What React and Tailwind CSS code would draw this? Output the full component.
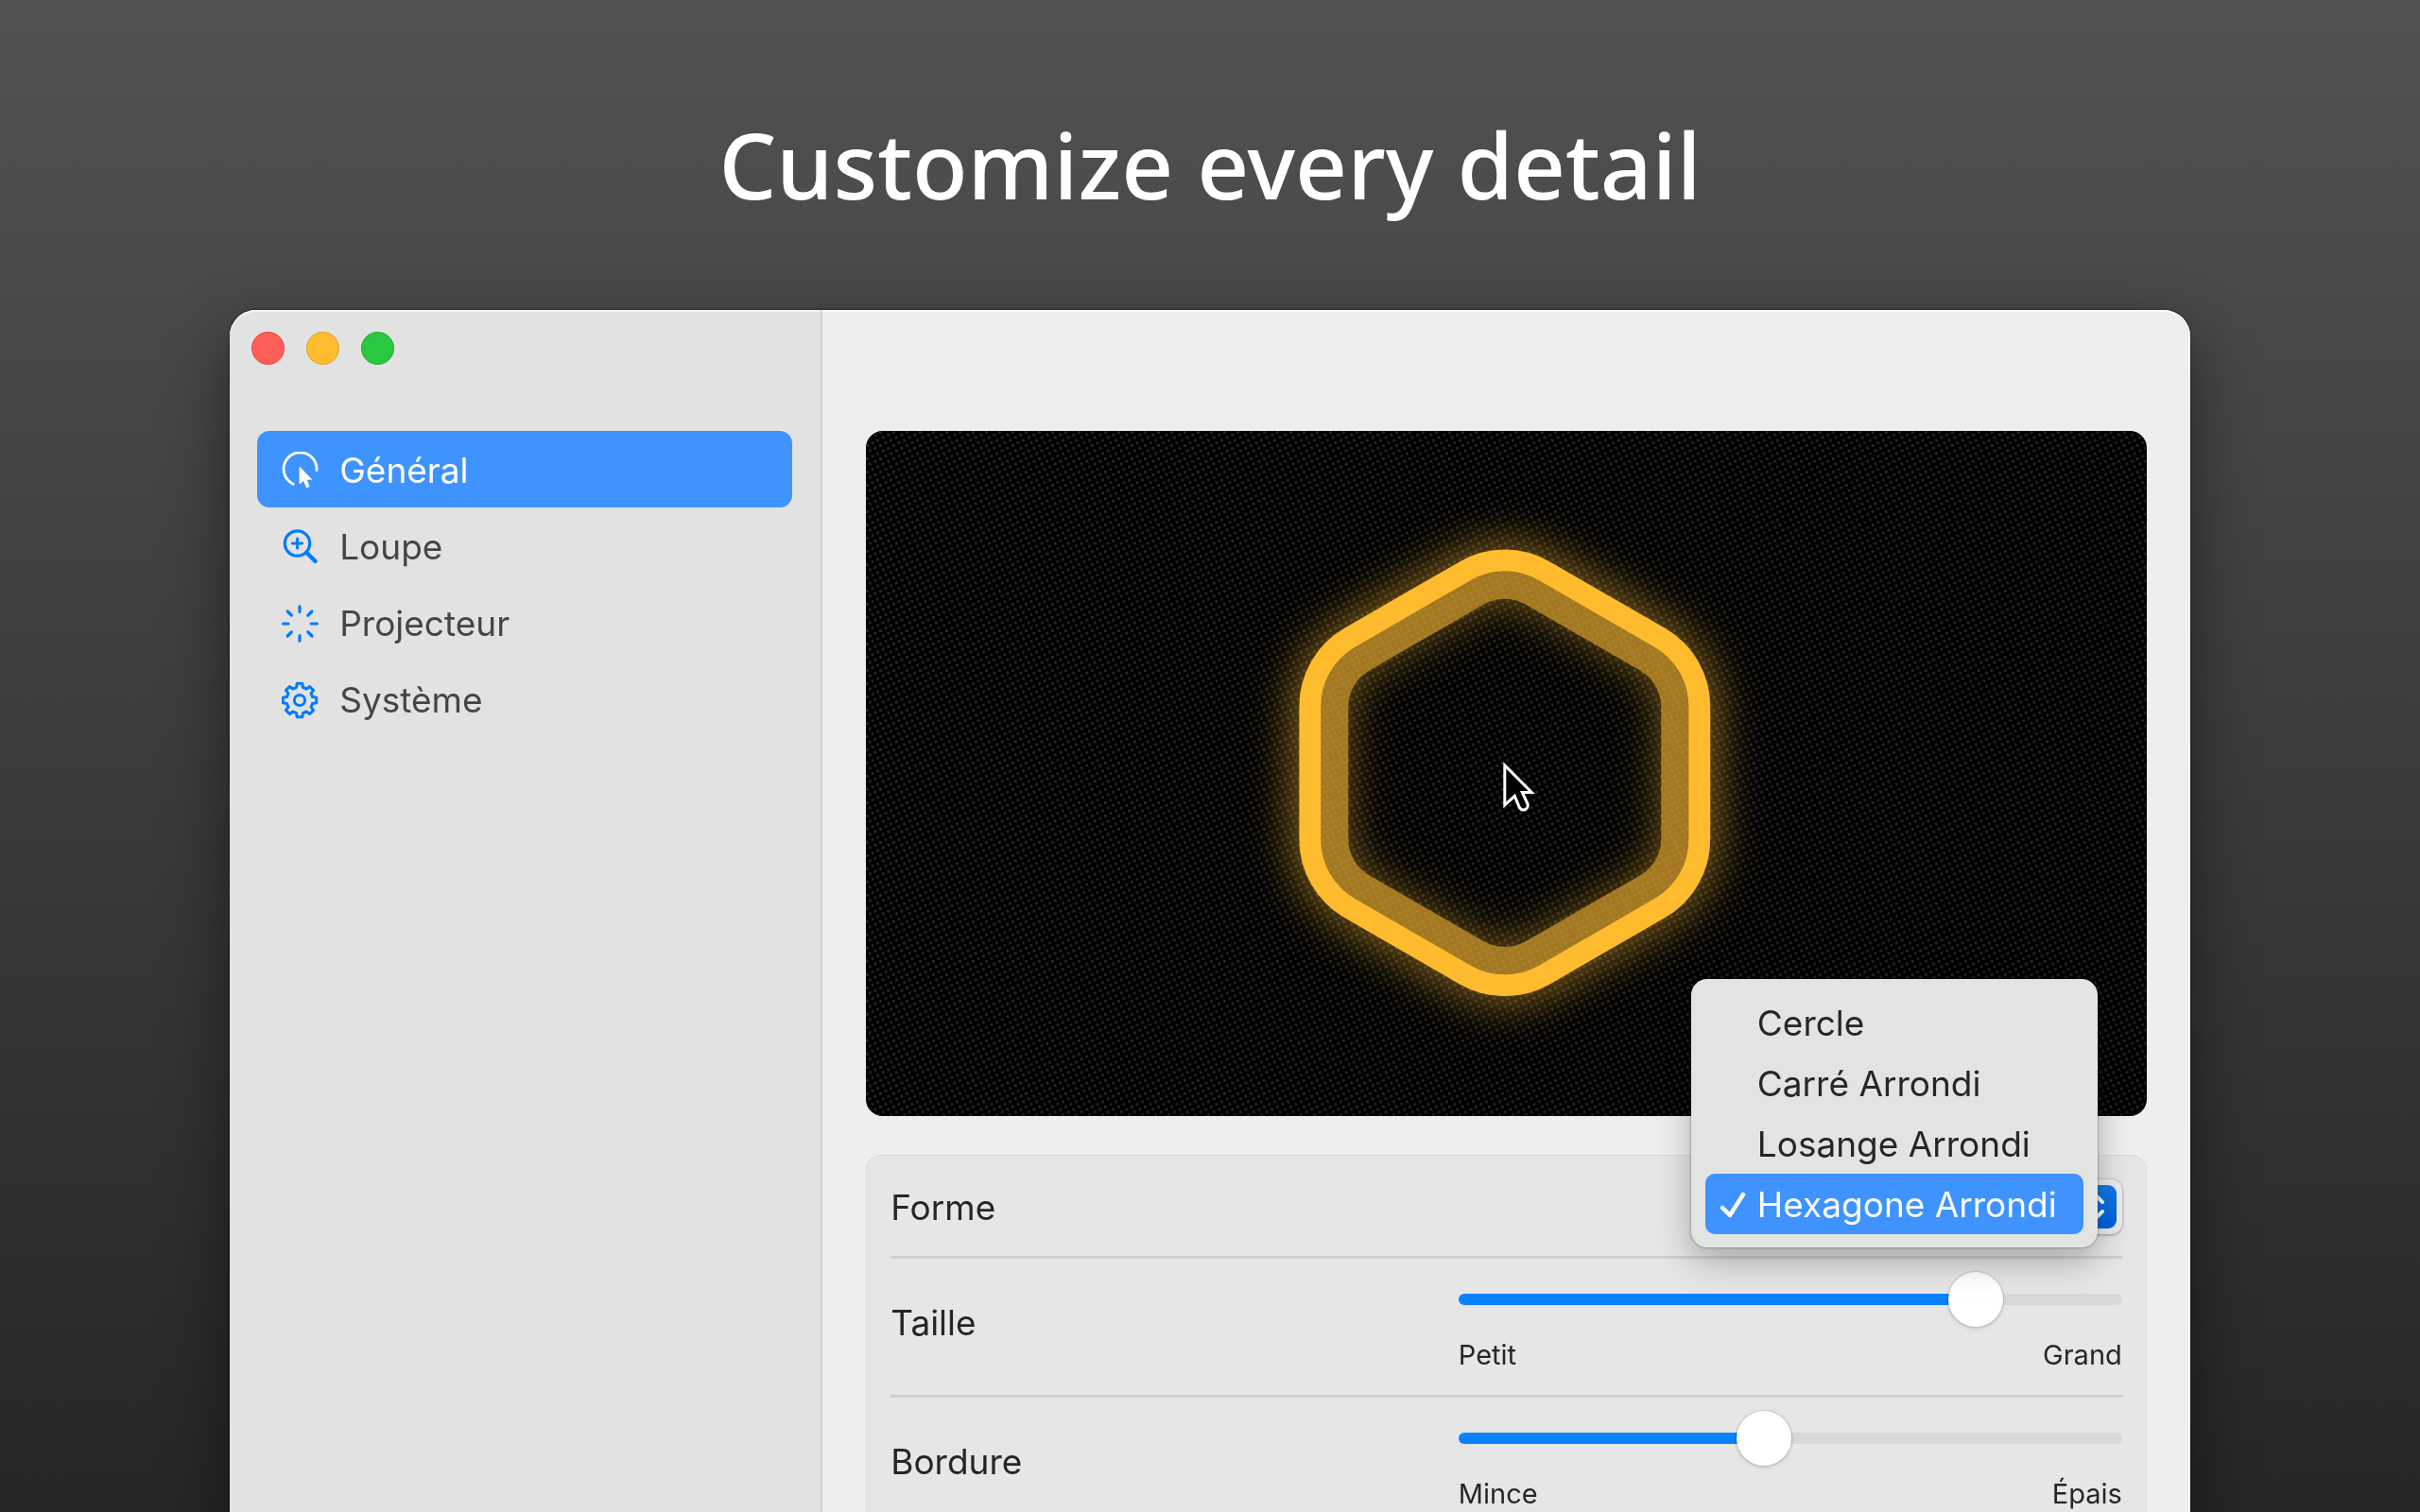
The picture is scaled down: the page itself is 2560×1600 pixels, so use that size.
import { useState } from 'react';

const ORANGE = '#ffbb2e';

const SHAPES = ['Cercle', 'Carré Arrondi', 'Losange Arrondi', 'Hexagone Arrondi'];

const TABS = [
    { id: 'general', label: 'Général', Icon: PointerIcon },
    { id: 'loupe', label: 'Loupe', Icon: LoupeIcon },
    { id: 'projecteur', label: 'Projecteur', Icon: RaysIcon },
    { id: 'systeme', label: 'Système', Icon: GearIcon },
];

function PointerIcon() {
    return (
        <svg viewBox="0 0 40 40" className="w-10 h-10" fill="none" aria-hidden="true">
            <path d="M12.2 34.2 A17.5 17.5 0 1 1 37 19.5" stroke="currentColor" strokeWidth="2.8" strokeLinecap="round" />
            <path d="M19 16.2 V34 L23.2 30.4 L26.4 38 L29.2 36.8 L26.2 29.4 L31.6 29.2 Z" fill="currentColor" stroke="currentColor" strokeWidth="0.8" strokeLinejoin="round" />
        </svg>
    );
}

function LoupeIcon() {
    return (
        <svg viewBox="0 0 40 40" className="w-10 h-10" fill="none" stroke="currentColor" strokeLinecap="round" aria-hidden="true">
            <circle cx="16.5" cy="16" r="13.2" strokeWidth="3.2" />
            <path d="M16.5 10.8 V21.2 M11.3 16 H21.7" strokeWidth="2.8" />
            <path d="M26.3 25.8 L35.6 35" strokeWidth="4.4" />
        </svg>
    );
}

function RaysIcon() {
    return (
        <svg viewBox="0 0 40 40" className="w-10 h-10" fill="none" stroke="currentColor" strokeWidth="3.2" strokeLinecap="round" aria-hidden="true">
            <path d="M19 1.8 V7.5 M19 32.5 V38.2 M1.6 20 H7 M31.2 20 H37.4" />
            <path d="M6.2 7 L10.4 11.2 M27.8 28.8 L32 33 M6.2 33 L10.4 28.8 M27.8 11.2 L32 7" />
        </svg>
    );
}

// eight rounded teeth around the centre
function gearPath(cx, cy) {
    const profile = [[-14, 14], [-9, 18], [9, 18], [14, 14]];
    const points = [];
    for (let tooth = 0; tooth < 8; tooth++) {
        for (const [angle, radius] of profile) {
            const a = ((tooth * 45 + angle - 90) * Math.PI) / 180;
            points.push(`${(cx + radius * Math.cos(a)).toFixed(2)} ${(cy + radius * Math.sin(a)).toFixed(2)}`);
        }
    }
    return `M${points.join(' L')} Z`;
}

function GearIcon() {
    return (
        <svg viewBox="0 0 40 40" className="w-10 h-10" fill="none" stroke="currentColor" strokeWidth="3" strokeLinejoin="round" aria-hidden="true">
            <path d={gearPath(19, 20)} />
            <circle cx="19" cy="20" r="5.6" />
        </svg>
    );
}

function hexagonPath(cx, cy, halfWidth, radius) {
    const size = halfWidth / Math.cos(Math.PI / 6);
    const cut = (radius * Math.tan(Math.PI / 6)) / size;
    const corners = [0, 1, 2, 3, 4, 5].map((i) => {
        const a = ((i * 60 - 90) * Math.PI) / 180;
        return [cx + size * Math.cos(a), cy + size * Math.sin(a)];
    });
    const towards = (from, to) => [from[0] + (to[0] - from[0]) * cut, from[1] + (to[1] - from[1]) * cut];

    return corners
        .map((corner, i) => {
            const start = towards(corner, corners[(i + 5) % 6]);
            const end = towards(corner, corners[(i + 1) % 6]);
            return `${i === 0 ? 'M' : 'L'}${start[0]} ${start[1]} A${radius} ${radius} 0 0 1 ${end[0]} ${end[1]}`;
        })
        .join(' ') + ' Z';
}

function Preview() {
    const border = hexagonPath(676, 362, 206, 84);
    const inner = hexagonPath(676, 362, 180, 59);

    return (
        <svg viewBox="0 0 1355 725" className="block w-full rounded-[18px] bg-black" role="img" aria-label="Hexagone Arrondi">
            <defs>
                <pattern id="mesh" width="14" height="14" patternUnits="userSpaceOnUse">
                    <path d="M0 0h3v3h-3z M2.8 5.6h3v3h-3z M5.6 11.2h2.8v2.8h-2.8z M8.4 2.8h3v3h-3z M11.2 8.4h2.8v3h-2.8z" fill="#242424" />
                </pattern>
                <filter id="glow" x="-40%" y="-40%" width="180%" height="180%" colorInterpolationFilters="sRGB">
                    <feGaussianBlur stdDeviation="26" />
                </filter>
            </defs>
            <rect width="1355" height="725" fill="url(#mesh)" />
            <g fill="none" stroke={ORANGE} filter="url(#glow)" opacity="0.72">
                <path d={border} strokeWidth="25" />
                <path d={inner} strokeWidth="29" opacity="0.5" />
            </g>
            <path d={inner} fill="none" stroke="#a37820" strokeWidth="29" />
            <path d={inner} fill="none" stroke="url(#mesh)" strokeWidth="29" className="mix-blend-screen" opacity="0.5" />
            <path d={border} fill="none" stroke={ORANGE} strokeWidth="23" />
            <path
                d="M676 354 V396 L686.5 386.5 L691.5 398.5 Q694 402.5 698 400.5 Q701.5 398.5 700 394.5 L694.5 382.5 H704.5 Z"
                fill="#000"
                stroke="#fff"
                strokeWidth="3"
            />
        </svg>
    );
}

function SliderRow({ id, label, min, max, initial }) {
    const [value, setValue] = useState(initial);
    return (
        <div className="flex items-center justify-between border-t-3 border-[#cfcfcf] pt-[37px] pb-6">
            <label htmlFor={id} className="pb-5 text-[37px] leading-[46px]">{label}</label>
            <div className="w-[702px]">
                <input
                    id={id}
                    type="range"
                    min="0"
                    max="1000"
                    value={value}
                    onChange={(e) => setValue(Number(e.target.value))}
                    className="block w-full h-3 appearance-none rounded-full [&::-webkit-slider-thumb]:appearance-none [&::-webkit-slider-thumb]:size-[58px] [&::-webkit-slider-thumb]:rounded-full [&::-webkit-slider-thumb]:bg-white [&::-webkit-slider-thumb]:shadow-[0_0_2px_1px_rgba(0,0,0,0.12),0_2px_4px_rgba(0,0,0,0.12)]"
                    style={{ background: `linear-gradient(to right, #0a82ff ${value / 10}%, #d8d8d8 ${value / 10}%)` }}
                />
                <div className="mt-[35px] flex justify-between text-[29px] leading-9">
                    <span>{min}</span>
                    <span>{max}</span>
                </div>
            </div>
        </div>
    );
}

function ShapeRow() {
    const [shape, setShape] = useState('Hexagone Arrondi');
    return (
        <div className="flex items-center justify-between pt-[25px] pb-[23px]">
            <label htmlFor="forme" className="pt-[2px] text-[37px] leading-[46px]">Forme</label>
            <div className="relative w-[430px]">
                <select
                    id="forme"
                    value={shape}
                    onChange={(e) => setShape(e.target.value)}
                    className="block w-full h-[58px] appearance-none rounded-xl bg-[#ececec] pl-4 text-[37px] text-transparent shadow-[0_0_2px_1px_rgba(0,0,0,0.16),0_2px_3px_rgba(0,0,0,0.14)]"
                >
                    {SHAPES.map((name) => <option key={name}>{name}</option>)}
                </select>
                <span className="pointer-events-none absolute top-[6px] right-[6px] flex size-[46px] items-center justify-center rounded-[9px] bg-gradient-to-b from-[#1479e8] to-[#0060dc] text-white">
                    <svg viewBox="0 0 24 36" className="h-9 w-6" fill="none" stroke="currentColor" strokeWidth="4" strokeLinecap="round" strokeLinejoin="round" aria-hidden="true">
                        <path d="M4 13 L12 5 L20 13 M4 23 L12 31 L20 23" />
                    </svg>
                </span>
                <div role="listbox" aria-label="Forme" className="absolute right-[26px] bottom-[-14px] w-[430px] rounded-[17px] bg-[#e2e4e1] px-[15px] py-[14px] shadow-[0_0_2px_1px_rgba(0,0,0,0.2),0_14px_36px_rgba(0,0,0,0.28)]">
                    {SHAPES.map((name) => {
                        const selected = name === shape;
                        return (
                            <button
                                key={name}
                                type="button"
                                role="option"
                                aria-selected={selected}
                                onClick={() => setShape(name)}
                                className={`flex h-16 w-full items-center rounded-[10px] pt-[2px] pl-[14px] text-left whitespace-nowrap text-[37px] ${selected ? 'bg-[#3e93ff] text-white' : ''}`}
                            >
                                <span className="w-[41px] shrink-0">
                                    {selected && (
                                        <svg viewBox="0 0 30 30" className="size-[30px]" fill="none" stroke="currentColor" strokeWidth="4.4" strokeLinecap="round" strokeLinejoin="round" aria-hidden="true">
                                            <path d="M4 18 L12 26 L26 4" />
                                        </svg>
                                    )}
                                </span>
                                {name}
                            </button>
                        );
                    })}
                </div>
            </div>
        </div>
    );
}

export default function App() {
    const [tab, setTab] = useState('general');

    return (
        <main className="flex h-screen flex-col items-center overflow-hidden bg-gradient-to-b from-[#525252] to-[#262626] font-['Inter','Noto_Sans',sans-serif] text-[#262626]">
            <h1 className="pt-[104px] font-['Noto_Sans','Open_Sans',sans-serif] text-[96px] leading-[140px] font-medium text-white">
                Customize every detail
            </h1>

            <div className="mt-[84px] flex w-[81%] flex-1 rounded-t-[28px] bg-[#eeeeee] shadow-[0_0_2px_1px_rgba(0,0,0,0.35),0_24px_70px_rgba(0,0,0,0.45)]">
                <aside className="w-[627px] shrink-0 rounded-tl-[28px] border-r-2 border-[#d2d2d2] bg-[#e2e2e2] pr-[30px] pl-[29px] shadow-[inset_0_2px_1px_#f4f4f4]">
                    <div className="-ml-[6px] flex gap-[23px] pt-[23px]">
                        <button type="button" aria-label="Fermer" className="size-[35px] rounded-full border border-[#e2463f] bg-[#ff5f57]" />
                        <button type="button" aria-label="Réduire" className="size-[35px] rounded-full border border-[#e0a123] bg-[#febc2e]" />
                        <button type="button" aria-label="Agrandir" className="size-[35px] rounded-full border border-[#1dad2b] bg-[#28c840]" />
                    </div>

                    <nav className="mt-[70px]">
                        {TABS.map(({ id, label, Icon }) => {
                            const active = tab === id;
                            return (
                                <button
                                    key={id}
                                    type="button"
                                    onClick={() => setTab(id)}
                                    className={`flex h-[81px] w-full items-center gap-[21px] rounded-[13px] pt-[2px] pl-[26px] text-[37px] ${active ? 'bg-[#3e93ff] text-white' : 'text-[#454545]'}`}
                                >
                                    <span className={active ? 'text-white' : 'text-[#007aff]'}><Icon /></span>
                                    {label}
                                </button>
                            );
                        })}
                    </nav>
                </aside>

                <section className="min-w-0 flex-1 rounded-tr-[28px] px-[46px] pt-[128px] shadow-[inset_0_2px_1px_#fafafa]">
                    <Preview />
                    <div className="mt-[41px] rounded-t-[16px] border-x border-t border-[#dadada] bg-[#e6e6e6] px-[25px]">
                        <ShapeRow />
                        <SliderRow id="taille" label="Taille" min="Petit" max="Grand" initial={804} />
                        <SliderRow id="bordure" label="Bordure" min="Mince" max="Épais" initial={457} />
                    </div>
                </section>
            </div>
        </main>
    );
}
